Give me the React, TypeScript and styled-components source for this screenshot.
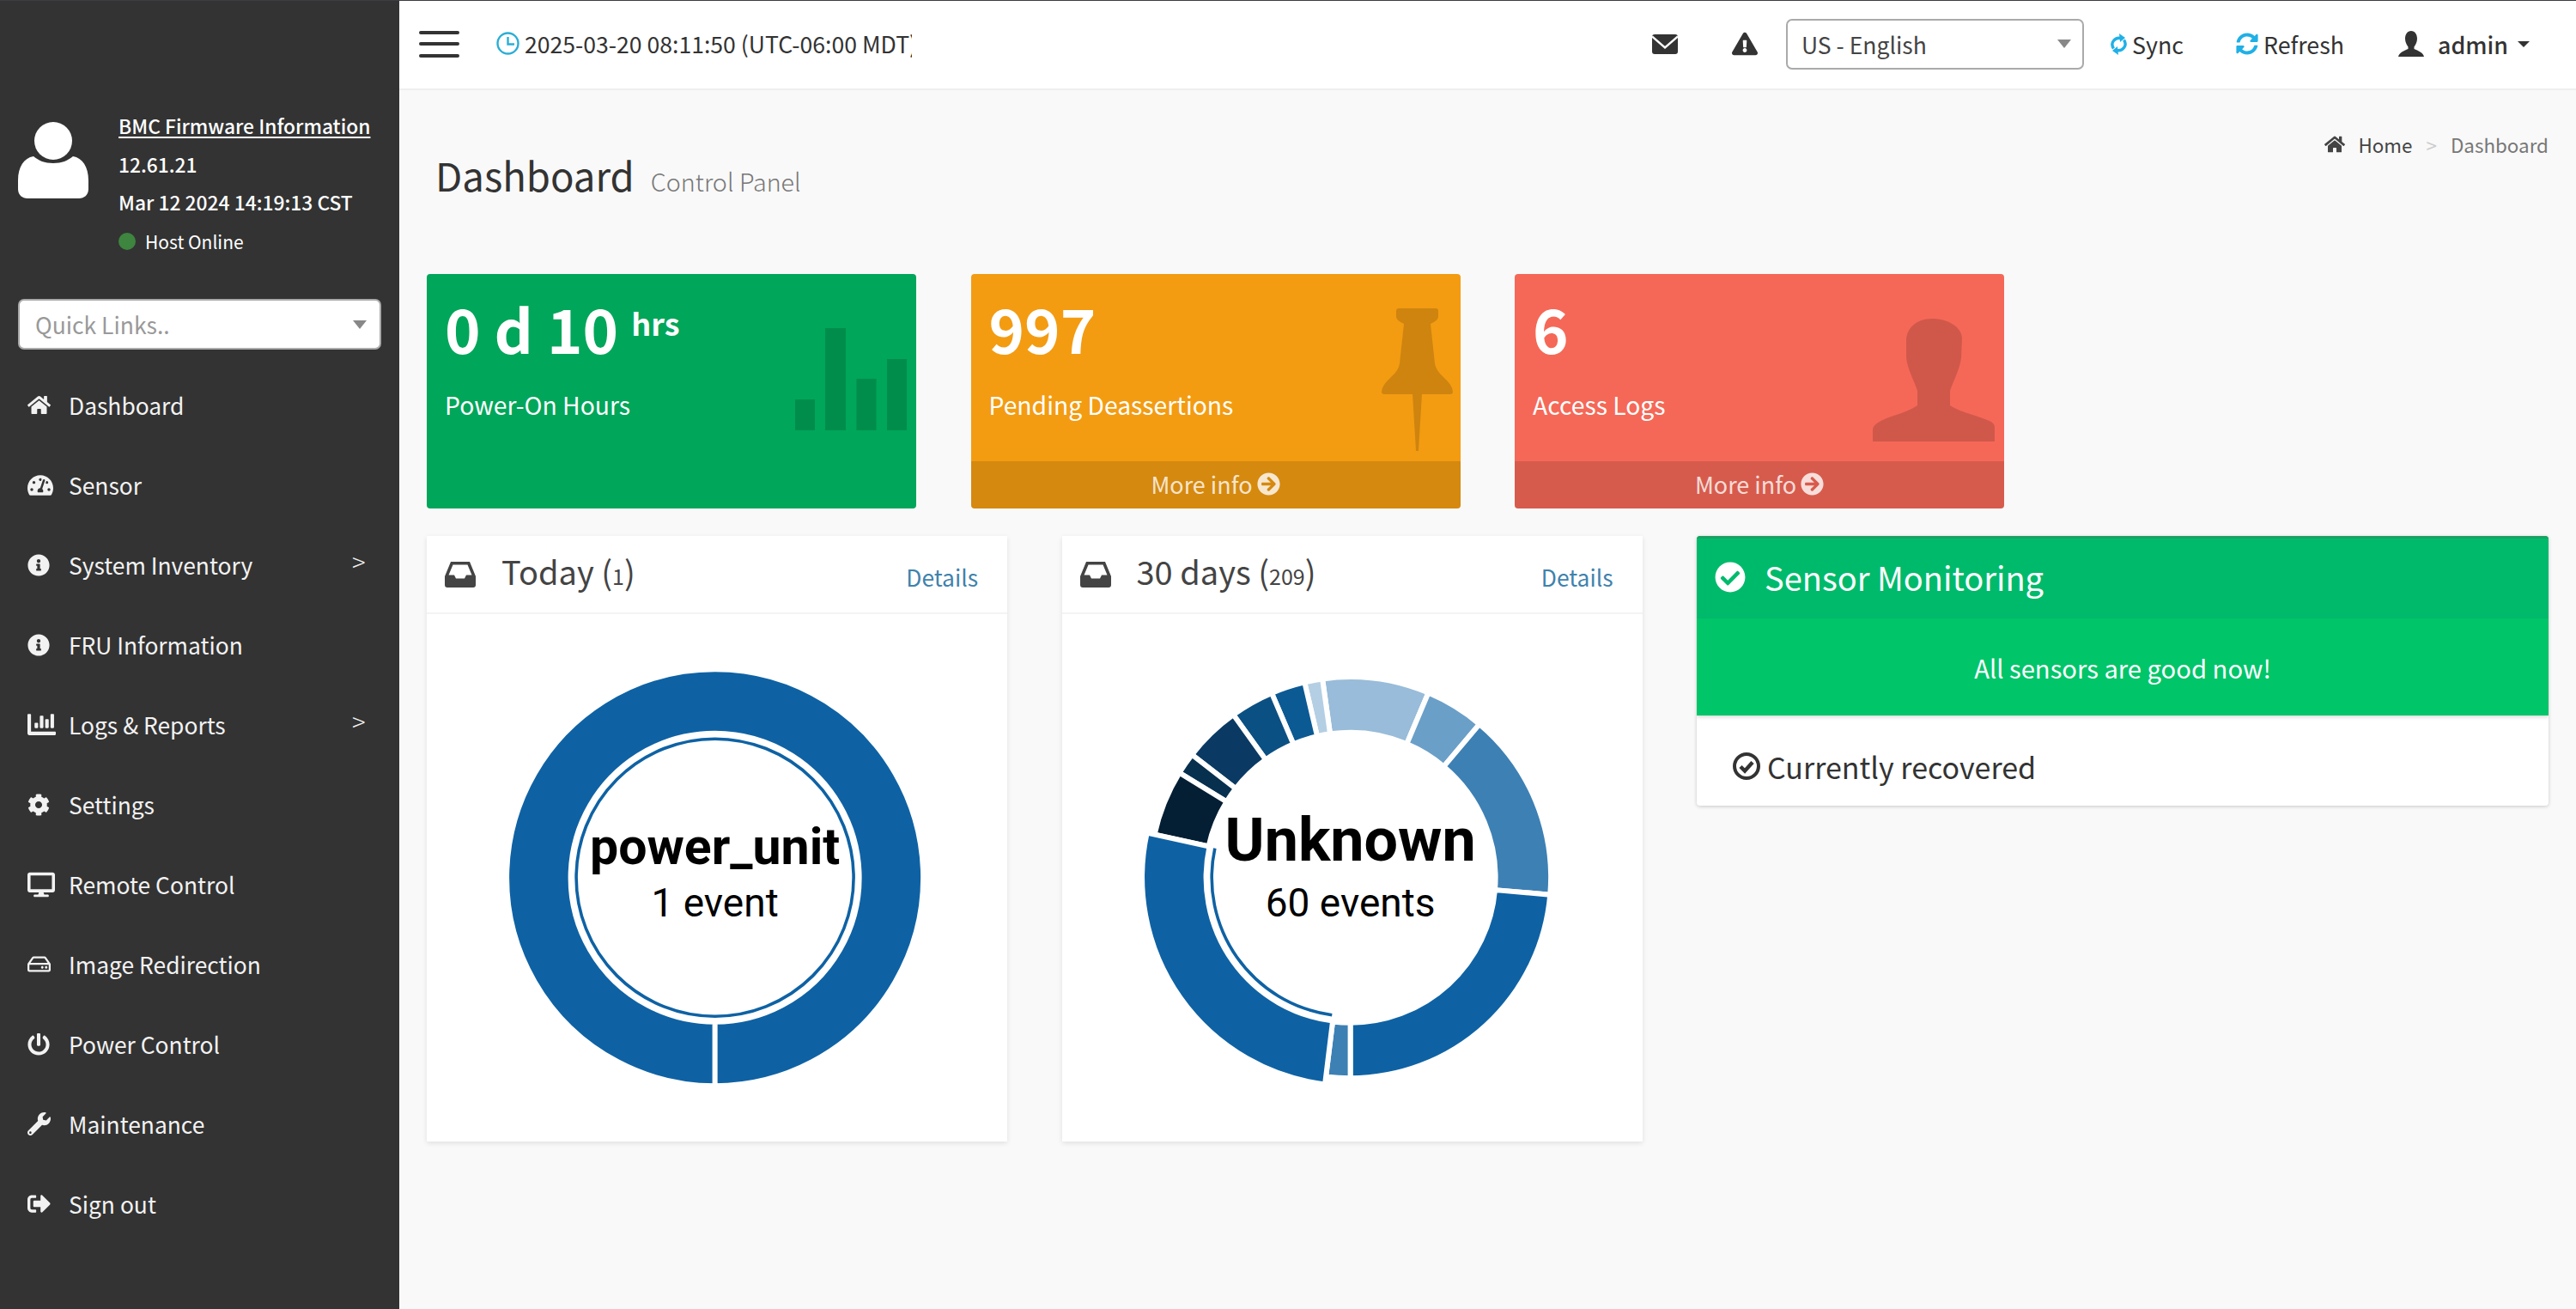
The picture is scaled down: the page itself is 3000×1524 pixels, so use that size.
import React from "react";
import styled, { createGlobalStyle } from "styled-components";
import {
  FaHome, FaTachometerAlt, FaInfoCircle, FaChartBar, FaCog, FaDesktop, FaRegHdd, FaPowerOff, FaWrench,
  FaSignOutAlt, FaExclamationTriangle, FaCheckCircle, FaArrowCircleRight, FaSyncAlt,
} from "react-icons/fa";

const SANS = `"Noto Sans CJK SC", "Noto Sans", sans-serif`;

const Global = createGlobalStyle`
  html, body { margin: 0; padding: 0; background: #f9f9f9; }
  body { font-family: ${SANS}; color: #333; }
  * { box-sizing: border-box; }
`;

const Page = styled.div`
  width: 3000px; height: 1524px; display: flex; overflow: hidden;
  border-top: 1px solid #3c3c44;
`;

const Sidebar = styled.aside`
  width: 465px; flex: none; background: #333; color: #fff; padding-top: 124px;
`;
const UserBlock = styled.div`display: flex; padding-left: 21px;`;
const AvatarWrap = styled.div`width: 117px; padding-top: 17px; flex: none;`;
const InfoCol = styled.div`display: flex; flex-direction: column;`;
const InfoLine = styled.div<{ $size?: number; $weight?: number; $underline?: boolean }>`
  height: 44.6px; line-height: 44.6px; font-size: ${(p) => p.$size ?? 22.8}px; white-space: nowrap;
  font-weight: ${(p) => p.$weight ?? 500};
  text-decoration: ${(p) => (p.$underline ? "underline" : "none")};
  text-underline-offset: 3px;
  display: flex; align-items: center;
`;
const Dot = styled.span`width: 20px; height: 20px; border-radius: 50%; background: #3e8540; margin-right: 11px; flex: none;`;
const Dropdown = styled.div<{ $w: number }>`
  width: ${(p) => p.$w}px; height: 59px; background: #fff; border: 2px solid #aaa; border-radius: 7px;
  display: flex; align-items: center; justify-content: space-between; flex: none;
`;
const QuickWrap = styled.div`padding: 45px 0 18px 21px;`;
const QuickText = styled.span`font-size: 26.5px; color: #999; padding-left: 18px; line-height: 55px;`;
const LangText = styled.span`font-size: 26.5px; color: #444; padding-left: 16px; line-height: 55px;`;
const Arrow = styled.span<{ $r: number }>`
  width: 0; height: 0; border-left: 8px solid transparent; border-right: 8px solid transparent;
  border-top: 10px solid #888; margin-right: ${(p) => p.$r}px;
`;
const NavList = styled.nav`display: flex; flex-direction: column;`;
const NavRow = styled.div`
  height: 93px; display: flex; align-items: center; font-size: 26.4px; color: #f2f2f2; position: relative;
`;
const NavIcon = styled.span`width: 80px; padding-left: 32px; display: flex; align-items: center; flex: none;`;
const Chevron = styled.span`position: absolute; left: 410px; top: 27px; font-size: 29px; line-height: 30px; font-weight: 300;`;

const Main = styled.main`flex: 1; min-width: 0; display: flex; flex-direction: column; background: #f9f9f9;`;
const Navbar = styled.header`
  height: 104px; background: #fff; border-bottom: 2px solid #eee; display: flex; align-items: center; flex: none; position: relative;
`;
const Burger = styled.div`
  margin-left: 23px; width: 47px; height: 31px; display: flex; flex-direction: column; justify-content: space-between; margin-top: -2px; flex: none;
`;
const BurgerLine = styled.span`height: 4px; border-radius: 2px; background: #333; display: block;`;
const DateBox = styled.div`
  margin-left: 43px; width: 484px; height: 40px; line-height: 40px; display: flex; align-items: center; overflow: hidden; white-space: nowrap;
  font-size: 26.6px; flex: none; color: #333; margin-top: -3px;
`;
const NavRight = styled.div`margin-left: auto; display: flex; align-items: center; height: 100%; padding-right: 54px; padding-bottom: 2px;`;
const TopIcon = styled.span<{ $c?: string; $s: number; $mr: number }>`
  display: flex; color: ${(p) => p.$c ?? "#333"}; font-size: ${(p) => p.$s}px; margin-right: ${(p) => p.$mr}px;
`;
const TopLink = styled.span<{ $weight?: number; $mr: number }>`
  font-size: 26.8px; font-weight: ${(p) => p.$weight ?? 400}; margin-right: ${(p) => p.$mr}px; color: #333;
`;
const Caret = styled.span`width: 0; height: 0; border-left: 7.5px solid transparent; border-right: 7.5px solid transparent; border-top: 7px solid #333;`;
const SelectGap = styled.span`width: 31px; flex: none;`;

const Content = styled.div`flex: 1; display: flex; flex-direction: column; padding: 0 32px 0 32px;`;
const ContentHeader = styled.div`height: 214px; display: flex; justify-content: space-between; flex: none;`;
const TitleBox = styled.div`padding: 66px 0 0 10px; display: flex; align-items: baseline;`;
const Title = styled.h1`margin: 0; font-size: 45.5px; font-weight: 400; color: #333; line-height: 64px;`;
const SubTitle = styled.small`font-size: 28.7px; font-weight: 300; color: #777; margin-left: 19px;`;
const Crumbs = styled.div`display: flex; align-items: center; height: 40px; margin-top: 43px; font-size: 22.4px; color: #444;`;
const CrumbSep = styled.span`color: #ccc; margin: 0 16px;`;
const CrumbLast = styled.span`color: #777;`;

const CardRow = styled.div`display: flex; gap: 63.5px; flex: none;`;
const Card = styled.div<{ $bg: string }>`
  width: 570px; height: 273px; background: ${(p) => p.$bg}; border-radius: 4px; color: #fff; position: relative; overflow: hidden;
  display: flex; flex-direction: column;
`;
const CardBody = styled.div`flex: 1; padding: 18px 21px 0;`;
const CardNum = styled.div`font-size: 70.5px; font-weight: 700; line-height: 88px; white-space: nowrap;`;
const CardSup = styled.sup`font-size: 36px; font-weight: 700; vertical-align: baseline; position: relative; top: -21px; margin-left: 15px; line-height: 0;`;
const CardLabel = styled.div`font-size: 28.3px; line-height: 44px; margin-top: 24px;`;
const CardFooter = styled.div`
  height: 55px; flex: none; background: rgba(0,0,0,.12); display: flex; align-items: center; justify-content: center;
  color: rgba(255,255,255,.8); font-size: 27px; gap: 5px; padding-bottom: 3px;
`;
const CardArt = styled.svg<{ $r: number; $t: number }>`position: absolute; right: ${(p) => p.$r}px; top: ${(p) => p.$t}px; fill: rgba(0,0,0,.15);`;

const PanelRow = styled.div`display: flex; gap: 63.5px; margin-top: 32px; flex: none; align-items: flex-start;`;
const Panel = styled.section`
  width: 676px; height: 705px; background: #fff; box-shadow: 0 2px 6px rgba(0,0,0,.1); display: flex; flex-direction: column; flex: none;
`;
const PanelHead = styled.div`
  height: 91px; border-bottom: 2px solid #f4f4f4; display: flex; align-items: center; padding: 0 34px 0 21px; flex: none; color: #444;
`;
const PanelTitle = styled.div`font-size: 38px; margin-left: 30px; line-height: 50px; margin-top: -3px; flex: 1;`;
const PanelCount = styled.small`font-size: 25px;`;
const DetailLink = styled.a`font-size: 26.4px; color: #3f82ad; margin-top: 5px;`;
const Chart = styled.svg`display: block; width: 676px; height: 614px; flex: none;`;
const ChartMain = styled.text<{ $s: number }>`font-family: Roboto, sans-serif; font-weight: 700; font-size: ${(p) => p.$s}px; fill: #000; text-anchor: middle;`;
const ChartSub = styled.text`font-family: Roboto, sans-serif; font-weight: 400; font-size: 46px; fill: #000; text-anchor: middle;`;

const StatusPanel = styled.section`
  flex: 1; height: 314px; background: #fff; border-radius: 4px; box-shadow: 0 1px 4px rgba(0,0,0,.2); overflow: hidden; display: flex; flex-direction: column;
`;
const StatusHead = styled.div`
  height: 96px; background: #00ba6c; border-top: 3px solid #1ba163; color: #fff; display: flex; align-items: center; padding-left: 21px; flex: none;
`;
const StatusTitle = styled.div`font-size: 38px; margin-left: 22px; line-height: 56px; margin-top: -3px;`;
const StatusBody = styled.div`
  height: 113px; background: #00c569; color: #fff; font-size: 29.2px; display: flex; align-items: center; justify-content: center; flex: none;
  box-shadow: 0 2px 4px rgba(0,0,0,.15); position: relative;
`;
const StatusFoot = styled.div`flex: 1; display: flex; align-items: center; padding: 13px 0 0 42px; font-size: 34px; color: #333; gap: 8px;`;

const polar = (r: number, a: number) => {
  const t = (a * Math.PI) / 180;
  return [r * Math.sin(t), -r * Math.cos(t)];
};
const arc = (a0: number, a1: number, ro: number, ri: number) => {
  const [x0, y0] = polar(ro, a0);
  const [x1, y1] = polar(ro, a1);
  const [x2, y2] = polar(ri, a1);
  const [x3, y3] = polar(ri, a0);
  const lg = a1 - a0 > 180 ? 1 : 0;
  return `M${x0} ${y0}A${ro} ${ro} 0 ${lg} 1 ${x1} ${y1}L${x2} ${y2}A${ri} ${ri} 0 ${lg} 0 ${x3} ${y3}Z`;
};

const SEGS: [number, number, string][] = [
  [-8, 22.9, "#98bcd9"],
  [22.9, 40.1, "#6a9fc8"],
  [40.1, 94.9, "#3d80b4"],
  [94.9, 180, "#0e62a4"],
  [180, 187, "#3d80b4"],
  [-13.2, -8, "#b4cfe3"],
  [-23.1, -13.2, "#0b5a94"],
  [-35.7, -23.1, "#0b5083"],
  [-52.2, -35.7, "#0a3a63"],
  [-58.5, -52.2, "#07304f"],
  [-77.6, -58.5, "#041f34"],
];

const AvatarIcon = () => (
  <svg width="82" height="90" viewBox="0 0 82 90" fill="#fff">
    <circle cx="41" cy="22" r="22" />
    <path d="M18 40C24 45 31 48 41 48S58 45 64 40C75 42 82 52 82 68V78C82 85 77 89 71 89H11C5 89 0 85 0 78V68C0 52 7 42 18 40Z" />
  </svg>
);
const ClockIcon = () => (
  <svg width="27" height="27" viewBox="0 0 27 27" fill="none" stroke="#2aaed6" style={{ marginRight: 6, flex: "none" }}>
    <circle cx="13.5" cy="13.5" r="12" strokeWidth="2.4" />
    <path d="M13.5 6V14.5H21" strokeWidth="2.4" />
  </svg>
);
const RecoveredIcon = () => (
  <svg width="32" height="32" viewBox="0 0 32 32">
    <circle cx="16" cy="16" r="14" fill="none" stroke="#333" strokeWidth="4" />
    <path d="M9 16.5L14 21.5L23 11.5" fill="none" stroke="#333" strokeWidth="4.5" />
  </svg>
);
const UserTop = () => (
  <svg width="30" height="30" viewBox="0 0 30 30" fill="#333" style={{ marginRight: 16 }}>
    <path d="M15 0C10.5 0 8 4 8 9C8 13 10 16.5 11.5 18.5V21C7 23 1 25 0 30H30C29 25 23 23 18.5 21V18.5C20 16.5 22 13 22 9C22 4 19.5 0 15 0Z" />
  </svg>
);
const SyncIcon = () => (
  <svg width="19" height="25" viewBox="0 0 19 25" style={{ marginRight: 6 }}>
    <path d="M10 0L17 5L11 10Z" fill="#1fb0e6" />
    <path d="M8 15L9 25L2 20Z" fill="#1fb0e6" />
    <path d="M12 5.5C5 4 -1 11 3.5 17.5" fill="none" stroke="#1fb0e6" strokeWidth="3.4" />
    <path d="M7 19.5C14 21 20 14 15.5 7.5" fill="none" stroke="#1fb0e6" strokeWidth="3.4" />
  </svg>
);
const EnvelopeIcon = () => (
  <svg width="30" height="23" viewBox="0 0 30 23" style={{ marginRight: 63 }}>
    <rect width="30" height="23" rx="3" fill="#333" />
    <path d="M0 2.5L15 15.5L30 2.5" fill="none" stroke="#fff" strokeWidth="2.4" />
  </svg>
);
const InboxIcon = () => (
  <svg width="36" height="30" viewBox="0 0 36 30" style={{ flex: "none" }}>
    <path fillRule="evenodd" fill="#444" d="M7 0H29L36 17V27Q36 30 33 30H3Q0 30 0 27V17ZM9.5 3.5L4.5 15.5H11L13 19.5H23L25 15.5H31.5L26.5 3.5Z" />
  </svg>
);

const NAV: [React.ReactNode, string, boolean?][] = [
  [<FaHome size={27} />, "Dashboard"],
  [<FaTachometerAlt size={30} />, "Sensor"],
  [<FaInfoCircle size={26} />, "System Inventory", true],
  [<FaInfoCircle size={26} />, "FRU Information"],
  [<FaChartBar size={33} />, "Logs & Reports", true],
  [<FaCog size={26} />, "Settings"],
  [<FaDesktop size={32} />, "Remote Control"],
  [<FaRegHdd size={27} />, "Image Redirection"],
  [<FaPowerOff size={26} />, "Power Control"],
  [<FaWrench size={27} />, "Maintenance"],
  [<FaSignOutAlt size={27} />, "Sign out"],
];

export default function App() {
  return (
    <>
      <Global />
      <Page>
        <Sidebar>
          <UserBlock>
            <AvatarWrap><AvatarIcon /></AvatarWrap>
            <InfoCol>
              <InfoLine $underline>BMC Firmware Information</InfoLine>
              <InfoLine>12.61.21</InfoLine>
              <InfoLine>Mar 12 2024 14:19:13 CST</InfoLine>
              <InfoLine $weight={400} $size={21}><Dot />Host Online</InfoLine>
            </InfoCol>
          </UserBlock>
          <QuickWrap>
            <Dropdown $w={423}><QuickText>Quick Links..</QuickText><Arrow $r={15} /></Dropdown>
          </QuickWrap>
          <NavList>
            {NAV.map(([icon, label, more]) => (
              <NavRow key={label}>
                <NavIcon>{icon}</NavIcon>
                {label}
                {more && <Chevron>&gt;</Chevron>}
              </NavRow>
            ))}
          </NavList>
        </Sidebar>
        <Main>
          <Navbar>
            <Burger><BurgerLine /><BurgerLine /><BurgerLine /></Burger>
            <DateBox><ClockIcon />2025-03-20 08:11:50 (UTC-06:00 MDT)</DateBox>
            <NavRight>
              <EnvelopeIcon />
              <TopIcon $s={30} $mr={33}><FaExclamationTriangle /></TopIcon>
              <Dropdown $w={347}><LangText>US - English</LangText><Arrow $r={13} /></Dropdown>
              <SelectGap />
              <SyncIcon /><TopLink $mr={61}>Sync</TopLink>
              <TopIcon $c="#1fb0e6" $s={26} $mr={6}><FaSyncAlt /></TopIcon>
              <TopLink $mr={63}>Refresh</TopLink>
              <UserTop /><TopLink $weight={500} $mr={11}>admin</TopLink><Caret />
            </NavRight>
          </Navbar>
          <Content>
            <ContentHeader>
              <TitleBox><Title>Dashboard</Title><SubTitle>Control Panel</SubTitle></TitleBox>
              <Crumbs>
                <FaHome size={24} style={{ marginRight: 15 }} />Home<CrumbSep>&gt;</CrumbSep><CrumbLast>Dashboard</CrumbLast>
              </Crumbs>
            </ContentHeader>
            <CardRow>
              <Card $bg="#00a65a">
                <CardBody>
                  <CardNum>0 d 10<CardSup>hrs</CardSup></CardNum>
                  <CardLabel>Power-On Hours</CardLabel>
                </CardBody>
                <CardArt $r={11} $t={63} width="130" height="119" viewBox="0 0 130 119">
                  <rect x="0" y="83" width="23" height="36" />
                  <rect x="35" y="0" width="24" height="119" />
                  <rect x="71.5" y="59" width="23" height="60" />
                  <rect x="107" y="36" width="23" height="83" />
                </CardArt>
              </Card>
              <Card $bg="#f39c12">
                <CardBody>
                  <CardNum>997</CardNum>
                  <CardLabel>Pending Deassertions</CardLabel>
                </CardBody>
                <CardFooter>More info <FaArrowCircleRight /></CardFooter>
                <CardArt $r={9} $t={40} width="83" height="166" viewBox="0 0 83 166">
                  <path d="M20 0H63Q66 0 66 3V10Q66 14 57 18L62 64Q63 72 72 80Q83 90 83 97Q83 100 80 100H47L43 166H40L36 100H3Q0 100 0 97Q0 90 11 80Q20 72 21 64L26 18Q17 14 17 10V3Q17 0 20 0Z" />
                </CardArt>
              </Card>
              <Card $bg="#f56857">
                <CardBody>
                  <CardNum>6</CardNum>
                  <CardLabel>Access Logs</CardLabel>
                </CardBody>
                <CardFooter>More info <FaArrowCircleRight /></CardFooter>
                <CardArt $r={11} $t={52} width="142" height="143" viewBox="0 0 142 143">
                  <path d="M69 0C50 0 39 12 39 26V46C41 60 48 72 52 84V101C40 110 18 113 6 121C2 124 0 126 0 129V143H142V126C142 123 140 121 136 119C120 112 102 109 90 101V84C94 72 101 60 103 46L104 23C104 10 88 0 69 0Z" />
                </CardArt>
              </Card>
            </CardRow>
            <PanelRow>
              <Panel>
                <PanelHead>
                  <InboxIcon />
                  <PanelTitle>Today (<PanelCount>1</PanelCount>)</PanelTitle>
                  <DetailLink>Details</DetailLink>
                </PanelHead>
                <Chart viewBox="0 0 676 614">
                  <g transform="translate(335.6 306.7)">
                    <path d={arc(180, 539.99, 242.5, 168)} fill="#0e62a4" stroke="#fff" strokeWidth="6" />
                    <circle r="161.5" fill="none" stroke="#0e62a4" strokeWidth="3.6" />
                    <ChartMain $s={59} x="0" y="-16">power_unit</ChartMain>
                    <ChartSub x="0" y="45">1 event</ChartSub>
                  </g>
                </Chart>
              </Panel>
              <Panel>
                <PanelHead>
                  <InboxIcon />
                  <PanelTitle>30 days (<PanelCount>209</PanelCount>)</PanelTitle>
                  <DetailLink>Details</DetailLink>
                </PanelHead>
                <Chart viewBox="0 0 676 614">
                  <g transform="translate(335.6 306.7)">
                    {SEGS.map(([a, b, c]) => (
                      <path key={a} d={arc(a, b, 233.5, 169)} fill={c} stroke="#fff" strokeWidth="6" />
                    ))}
                    <path d={arc(187, 282.4, 242.5, 168)} fill="#0e62a4" stroke="#fff" strokeWidth="6" />
                    <path d={arc(187.6, 282.2, 163.2, 159.6)} fill="#0e62a4" />
                    <ChartMain $s={70} x="0" y="-20">Unknown</ChartMain>
                    <ChartSub x="0" y="45">60 events</ChartSub>
                  </g>
                </Chart>
              </Panel>
              <StatusPanel>
                <StatusHead>
                  <FaCheckCircle size={36} style={{ marginTop: -4 }} />
                  <StatusTitle>Sensor Monitoring</StatusTitle>
                </StatusHead>
                <StatusBody>All sensors are good now!</StatusBody>
                <StatusFoot><RecoveredIcon />Currently recovered</StatusFoot>
              </StatusPanel>
            </PanelRow>
          </Content>
        </Main>
      </Page>
    </>
  );
}
